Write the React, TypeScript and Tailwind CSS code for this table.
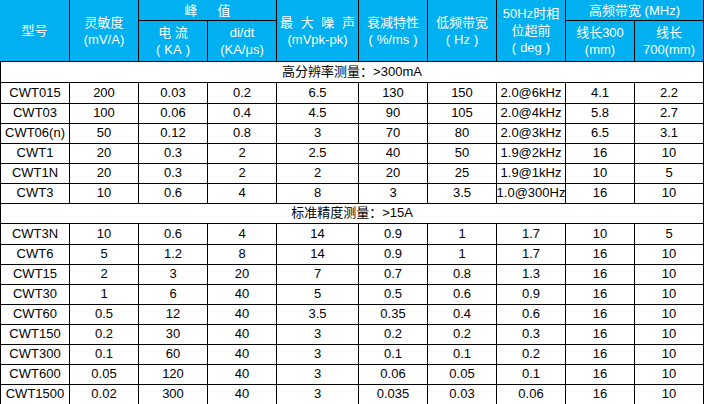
import React from "react";

const COLS = "grid grid-cols-[70px_69px_69px_69px_82px_69px_69px_69px_69px_69px]";

const hi: string[][] = [
  ["CWT015", "200", "0.03", "0.2", "6.5", "130", "150", "2.0@6kHz", "4.1", "2.2"],
  ["CWT03", "100", "0.06", "0.4", "4.5", "90", "105", "2.0@4kHz", "5.8", "2.7"],
  ["CWT06(n)", "50", "0.12", "0.8", "3", "70", "80", "2.0@3kHz", "6.5", "3.1"],
  ["CWT1", "20", "0.3", "2", "2.5", "40", "50", "1.9@2kHz", "16", "10"],
  ["CWT1N", "20", "0.3", "2", "2", "20", "25", "1.9@1kHz", "10", "5"],
  ["CWT3", "10", "0.6", "4", "8", "3", "3.5", "1.0@300Hz", "16", "10"],
];

const std: string[][] = [
  ["CWT3N", "10", "0.6", "4", "14", "0.9", "1", "1.7", "10", "5"],
  ["CWT6", "5", "1.2", "8", "14", "0.9", "1", "1.7", "16", "10"],
  ["CWT15", "2", "3", "20", "7", "0.7", "0.8", "1.3", "16", "10"],
  ["CWT30", "1", "6", "40", "5", "0.5", "0.6", "0.9", "16", "10"],
  ["CWT60", "0.5", "12", "40", "3.5", "0.35", "0.4", "0.6", "16", "10"],
  ["CWT150", "0.2", "30", "40", "3", "0.2", "0.2", "0.3", "16", "10"],
  ["CWT300", "0.1", "60", "40", "3", "0.1", "0.1", "0.2", "16", "10"],
  ["CWT600", "0.05", "120", "40", "3", "0.06", "0.05", "0.1", "16", "10"],
  ["CWT1500", "0.02", "300", "40", "3", "0.035", "0.03", "0.06", "16", "10"],
];

function Row({ cells }: { cells: string[] }) {
  return (
    <div className={`${COLS} h-[20px]`}>
      {cells.map((c, i) => (
        <div
          key={i}
          className={`flex items-center justify-center whitespace-nowrap border-r border-b border-black ${i === 0 ? "border-l" : ""}`}
        >
          {c}
        </div>
      ))}
    </div>
  );
}

function Group({ text }: { text: string }) {
  return (
    <div className="flex h-[21px] items-center justify-center border-l border-r border-b border-black">
      {text}
    </div>
  );
}

function Paren({ children }: { children: React.ReactNode }) {
  return (
    <span className="flex items-center gap-[4px]">
      <span>(</span>
      <span>{children}</span>
      <span>)</span>
    </span>
  );
}

const H = "flex flex-col items-center justify-center border-r border-b border-black text-center leading-[17px] whitespace-nowrap";

export default function App() {
  return (
    <div className="w-[704px] h-[404px] bg-white text-[13px] text-black font-['Liberation_Sans','Noto_Sans_CJK_SC',sans-serif]">
      <div className={`${COLS} grid-rows-[21px_41px] bg-[#00B0F0] text-white`}>
        <div className={`${H} col-start-1 row-start-1 row-span-2`}>型号</div>
        <div className={`${H} col-start-2 row-start-1 row-span-2`}>
          <span>灵敏度</span>
          <span>(mV/A)</span>
        </div>
        <div className={`${H} col-start-3 col-span-2 row-start-1 flex-row gap-[20px]`}>
          <span>峰</span>
          <span>值</span>
        </div>
        <div className={`${H} col-start-3 row-start-2`}>
          <span>电 流</span>
          <Paren>KA</Paren>
        </div>
        <div className={`${H} col-start-4 row-start-2`}>
          <span>di/dt</span>
          <span>(KA/μs)</span>
        </div>
        <div className={`${H} col-start-5 row-start-1 row-span-2`}>
          <span className="[word-spacing:4px]">最 大 噪 声</span>
          <span>(mVpk-pk)</span>
        </div>
        <div className={`${H} col-start-6 row-start-1 row-span-2`}>
          <span>衰减特性</span>
          <Paren>%/ms</Paren>
        </div>
        <div className={`${H} col-start-7 row-start-1 row-span-2`}>
          <span>低频带宽</span>
          <Paren>Hz</Paren>
        </div>
        <div className={`${H} col-start-8 row-start-1 row-span-2`}>
          <span>50Hz时相</span>
          <span>位超前</span>
          <Paren>deg</Paren>
        </div>
        <div className={`${H} col-start-9 col-span-2 row-start-1`}>高频带宽 (MHz)</div>
        <div className={`${H} col-start-9 row-start-2`}>
          <span>线长300</span>
          <span>(mm)</span>
        </div>
        <div className={`${H} col-start-10 row-start-2`}>
          <span>线长</span>
          <span>700(mm)</span>
        </div>
      </div>
      <Group text="高分辨率测量：>300mA" />
      {hi.map((r, i) => (
        <Row key={i} cells={r} />
      ))}
      <Group text="标准精度测量：>15A" />
      {std.map((r, i) => (
        <Row key={i} cells={r} />
      ))}
    </div>
  );
}
